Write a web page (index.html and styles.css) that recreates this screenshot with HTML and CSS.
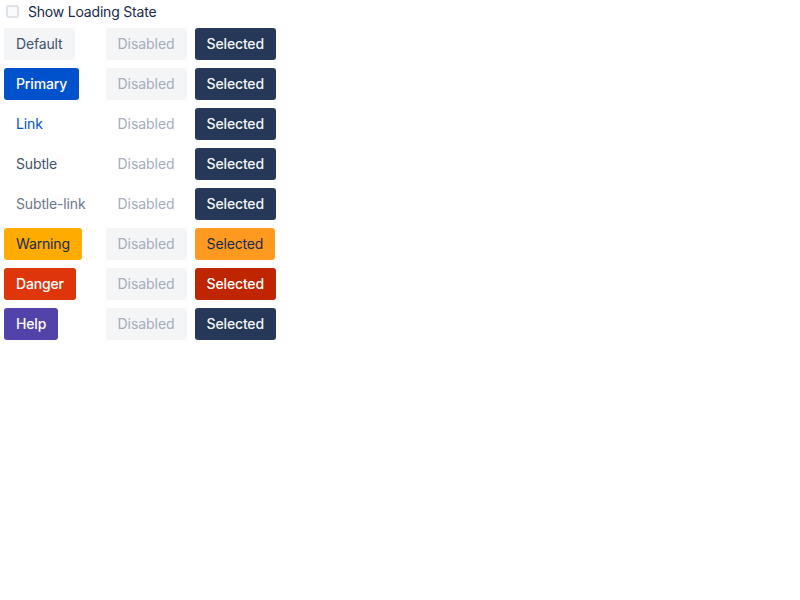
FILE: index.html
```html
<!DOCTYPE html>
<html>
<head>
<meta charset="utf-8">
<link rel="stylesheet" href="styles.css">
</head>
<body>
<label class="toggle">
  <span class="box"></span>
  <span class="toggle-text">Show Loading State</span>
</label>
<div class="grid">
  <button class="btn default">Default</button>
  <button class="btn disabled">Disabled</button>
  <button class="btn selected">Selected</button>

  <button class="btn primary">Primary</button>
  <button class="btn disabled">Disabled</button>
  <button class="btn selected">Selected</button>

  <button class="btn link">Link</button>
  <button class="btn disabled plain">Disabled</button>
  <button class="btn selected">Selected</button>

  <button class="btn subtle">Subtle</button>
  <button class="btn disabled plain">Disabled</button>
  <button class="btn selected">Selected</button>

  <button class="btn subtle-link">Subtle-link</button>
  <button class="btn disabled plain">Disabled</button>
  <button class="btn selected">Selected</button>

  <button class="btn warning">Warning</button>
  <button class="btn disabled">Disabled</button>
  <button class="btn selected-warning">Selected</button>

  <button class="btn danger">Danger</button>
  <button class="btn disabled">Disabled</button>
  <button class="btn selected-danger">Selected</button>

  <button class="btn help">Help</button>
  <button class="btn disabled">Disabled</button>
  <button class="btn selected">Selected</button>
</div>
</body>
</html>
```
FILE: styles.css
```css
html, body {
  margin: 0;
  padding: 0;
  background: #fff;
}
body {
  font-family: Inter, "Liberation Sans", Arial, sans-serif;
  font-size: 14px;
  color: #172B4D;
}
.toggle {
  display: flex;
  align-items: center;
  box-sizing: border-box;
  height: 24px;
  padding: 0 0 1px 6px;
  gap: 9px;
}
.box {
  width: 9px;
  height: 9px;
  border: 2px solid #DFE1E6;
  border-radius: 3px;
  background: #FAFBFC;
}
.toggle-text {
  color: #172B4D;
  letter-spacing: -0.2px;
}
.grid {
  display: grid;
  grid-template-columns: auto auto auto;
  justify-content: start;
  justify-items: start;
}
.btn {
  margin: 4px;
  height: 32px;
  line-height: 32px;
  padding: 0 12px;
  border: none;
  border-radius: 3px;
  font-family: inherit;
  font-size: 14px;
  font-weight: 400;
  letter-spacing: -0.15px;
  background: transparent;
  cursor: pointer;
  white-space: nowrap;
}
.default { background: #F4F5F7; color: #42526E; }
.disabled { background: #F4F5F7; color: #A5ADBA; letter-spacing: -0.05px; }
.disabled.plain { background: transparent; }
.selected { background: #253858; color: #F4F5F7; font-weight: 500; }
.primary { background: #0052CC; color: #fff; font-weight: 500; }
.link { color: #0052CC; }
.subtle { color: #42526E; }
.subtle-link { color: #6B778C; }
.warning { background: #FFAB00; color: #172B4D; }
.selected-warning { background: #FF991F; color: #172B4D; }
.danger { background: #DE350B; color: #fff; font-weight: 500; }
.selected-danger { background: #BF2600; color: #fff; font-weight: 500; }
.help { background: #5243AA; color: #fff; font-weight: 500; }
```
